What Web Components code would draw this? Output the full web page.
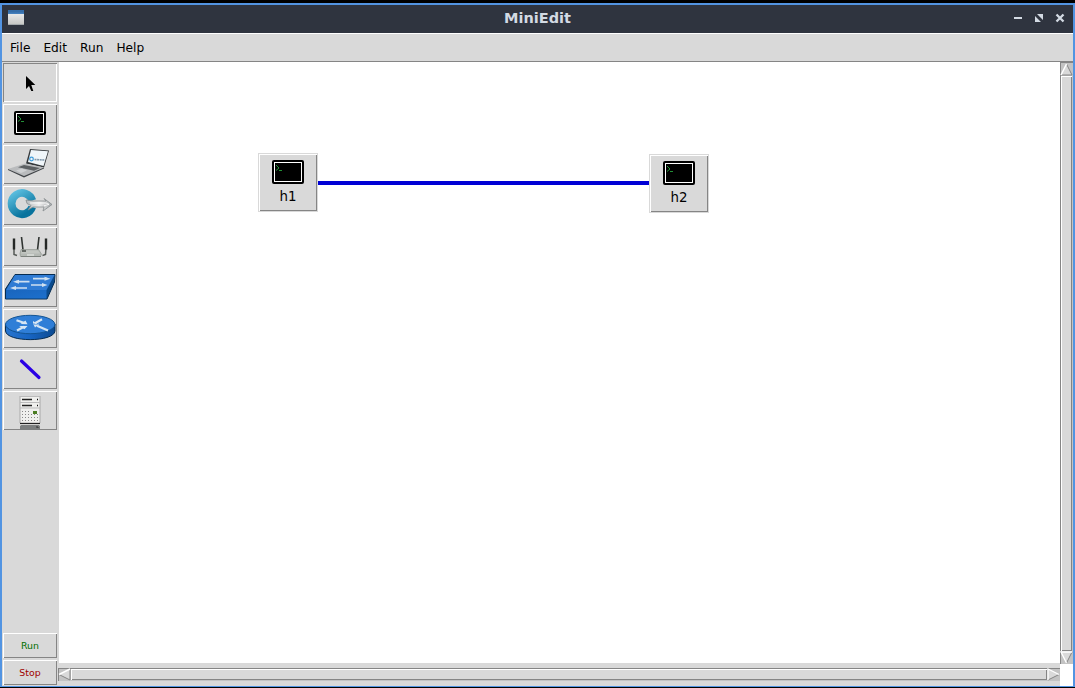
<!DOCTYPE html>
<html lang="en"><head><meta charset="utf-8"><title>MiniEdit</title>
<style>html,body{margin:0;width:1075px;height:688px;overflow:hidden;background:#000;font-family:"DejaVu Sans",sans-serif}</style></head>
<body><mini-edit></mini-edit>
<script>
const define=(name,html,init)=>customElements.define(name,class extends HTMLElement{
  constructor(){super();const t=document.createElement('template');t.innerHTML=html;
    this.attachShadow({mode:'open'}).append(t.content.cloneNode(true));}
  connectedCallback(){if(init)init(this,this.shadowRoot);}
});
const icons={
select:`<path fill="#000" d="M23 13v13l3-3 2.300 5h2l-2-6h4z"/>`,
host:`<rect x="11" y="7" width="32" height="24" rx="2" fill="#000"/><rect x="13.500" y="9.500" width="27" height="19" fill="#000" stroke="#fff"/><path d="M15 12l3 3-3 2.500M18 17.500h3" fill="none" stroke="#229237" stroke-width="1"/>`,
legacySwitch:`<path d="M27 4l19 1.500-5 17-18-4z" fill="#34383b"/><path d="M28 5l17 1.200-4.500 14.800L25 17z" fill="#f0f6fa"/><path d="M22 18.500l19 4-20 9L5 24z" fill="#b9bbbd"/><path d="M21 20l16 3-6 2.800-16-3.600z" fill="#5c6063"/><path d="M5 24l16 7 20-8.500v1L21 32.500 5 25z" fill="#404448"/><path d="M13 25.500l6-2 5 2-6 2.500z" fill="#cfd1d3"/><circle cx="28.500" cy="14" r="1.800" fill="none" stroke="#3b9bdb" stroke-width="1.200"/><path d="M31.500 14.500l10 .5" stroke="#8299ac" stroke-width="1.600" stroke-dasharray="2 .6"/>`,
controller:`<defs><linearGradient id="c" x2=".6" y2="1"><stop stop-color="#5dbfe0"/><stop offset="1" stop-color="#08739d"/></linearGradient><linearGradient id="a"><stop stop-color="#b4b9bb"/><stop offset=".5" stop-color="#ededed"/><stop offset="1" stop-color="#a2a6a8"/></linearGradient></defs><path d="M29.300 14.500A10.600 10.600 0 1 0 29.200 21" fill="none" stroke="url(#c)" stroke-width="7.800"/><path d="M23 14l7 1h13l-2-2.500 8 6-9 6.500 1-4H30l-5 3 3-4.500-4-2z" fill="url(#a)" stroke="#858b8e" stroke-width=".8"/><path d="M27 17h16l3 1.300-5 1.500" fill="none" stroke="#fff" stroke-width=".8"/>`,
legacyRouter:`<path d="M18.500 10l1.500 13M36 10l-1.500 13" stroke="#303432" stroke-width="1.600"/><path d="M11 21v6.500l3 1M43 21l-.5 6.500-3 1" fill="none" stroke="#555a57" stroke-width="1.500"/><path d="M11 11.500v11M43 11.500v11" stroke="#252826" stroke-width="2.400"/><path d="M18 22.500h17.500l3 4.500-1 2.500h-20l-.5-3z" fill="#b4b9b4" stroke="#8a908a" stroke-width=".6"/><path d="M19 23.500h16l2 3H18z" fill="#c2c6c1"/><path d="M19 24h4" stroke="#454a46" stroke-width="1.500"/><path d="M18 29.500h20" stroke="#727873" stroke-width=".8"/><path d="M24 28h7" stroke="#eef2ee"/>`,
switch:`<defs><linearGradient id="s" y2="1"><stop stop-color="#1a65bd"/><stop offset="1" stop-color="#1c70cd"/></linearGradient></defs><path d="M2.500 21L12 6.500h40L51.500 14 44 31H2.500z" fill="#0a4b8d" stroke="#062c51"/><path d="M12 7h39.500L43.500 22H3z" fill="#2f7bd4"/><path d="M3 22h40.500v8.500H3z" fill="url(#s)"/><path d="M30 10.700h14m-16 6.300h14M13 13.700h13.500M10 20h14" stroke="#cfe0f0" stroke-width="1.700"/><path d="M41.500 8.700l6 2-6 2zM39 15l5.500 2-5.500 2zM16 11.700l-6 2 6 2zM13 18l-6 2 6 2z" fill="#cfe0f0"/>`,
router:`<defs><linearGradient id="r"><stop stop-color="#2875cf"/><stop offset=".5" stop-color="#1764c1"/><stop offset="1" stop-color="#0c4a91"/></linearGradient></defs><path d="M2.500 15v7c1 11.500 48.500 11.500 49.500 0v-7z" fill="url(#r)" stroke="#062c51"/><ellipse cx="27.200" cy="15.500" rx="24.700" ry="9.200" fill="#2f7ed7" stroke="#135493"/><path d="M13.500 11.200l8 2.800M39 10.200l-7 4M14 21.500l7-3.700M45 21.500L34 16.700" fill="none" stroke="#d6e5f3" stroke-width="2.200"/><path d="M22.500 11.500l2 3.800-7-.2zM30 12v3.500h5.500zM16 17h8.500l-3 3.300zM30 14.500l6.500.3-4.500 3.700z" fill="#d6e5f3"/>`,
link:`<path d="M18.500 11L36 27.500" stroke="#2a00e5" stroke-width="3.200" stroke-linecap="round"/>`,
server:`<path d="M17 5h20v31H17z" fill="#f0f0ee"/><path d="M17 5v27M37 5v27" stroke="#aaa"/><path d="M17 5.500h20M17 11.500h20M17 17h20" stroke="#bbb" stroke-width="1"/><path d="M19 8.500h10M19 14.500h10" stroke="#222" stroke-width="1.400"/><path d="M34 8.500h1M34 14.500h1" stroke="#111" stroke-width="1.500"/><path d="M19 20.500h9M19 23.500h17M19 26.500h17M19 29.500h17" stroke="#888" stroke-dasharray="1 2"/><path d="M30 21.500h4" stroke="#4b7e22" stroke-width="3"/><path d="M17 32.500h20" stroke="#222" stroke-width="1.300"/><path d="M17 35l1-1h18l1 1v4H17z" fill="#7b7e7e"/><path d="M33 36h2v1" stroke="#333" fill="none"/>`};
define('ui-icon',`<style>:host{display:block;width:54px;height:39px}svg{display:block}</style><svg width="54" height="39" viewBox="0 0 54 39"></svg>`,(h,r)=>r.querySelector('svg').innerHTML=icons[h.getAttribute('name')]);
define('tool-button',`<style>:host{display:grid;box-sizing:border-box;width:54px;height:39px;background:#d9d9d9;box-shadow:inset 1px 1px #fff,inset -1px -1px #858585}:host([pressed]){box-shadow:inset 1px 1px #858585,inset -1px -1px #fff}</style><slot></slot>`);
define('action-button',`<style>:host{display:flex;box-sizing:border-box;width:54px;height:25px;align-items:center;justify-content:center;font-size:9.400px;background:#d9d9d9;box-shadow:inset 1px 1px #fff,inset -1px -1px #858585}</style><slot></slot>`);
define('title-bar',`<style>:host{display:grid;grid-template-columns:80px 1fr 80px;height:28px;background:#2f343f;align-items:center}.mark{margin:-4px 0 0 6px;width:16px;height:15px;background:linear-gradient(#356da9 0 12%,#4580bd 24%,#e7e8e8 28%,#c7c8c6 94%,#78848c)}h1{margin:0;text-align:center;color:#d3dae3;font-size:14.500px;line-height:26px;height:28px}svg{display:block;width:80px;height:28px}</style><div class="mark"></div><h1><slot></slot></h1><svg viewBox="0 0 80 28"><path d="M21 13h8" stroke="#d3dae3" stroke-width="2"/><path d="M44 9h6v6zM42 11v6h6z" fill="#d3dae3"/><path d="M63.500 9.500l7 7M70.500 9.500l-7 7" stroke="#d3dae3" stroke-width="2.300"/></svg>`);
define('menu-bar',`<style>:host{display:flex;box-sizing:border-box;height:29px;background:#d9d9d9;border-top:1px solid #fff;border-bottom:1px solid #858585;padding:1px 8px 0;gap:13px;align-items:center;font-size:12.200px;line-height:27px}</style><slot></slot>`);
define('host-node',`<style>:host{position:absolute;box-sizing:border-box;width:60px;height:59px;border:1px solid #d9d9d9;background:#d9d9d9;box-shadow:inset 1px 1px #fff,inset -1px -1px #858585;text-align:center;font-size:13.400px;line-height:18px}ui-icon{margin:-1px 0 -4px 2px}</style><ui-icon name="host"></ui-icon><slot></slot>`);
define('scroll-bar',`<style>:host{display:flex;box-sizing:border-box;background:#c3c3c3;box-shadow:inset 1px 1px #858585}:host([vertical]){flex-direction:column;width:13px;height:602px;padding-top:1px}:host(:not([vertical])){width:1002px;height:13px}.thumb{flex:1;margin:0 1px;background:#d9d9d9;box-shadow:inset 1px 1px #fff,inset -1px -1px #858585}:host(:not([vertical])) .thumb{margin:1px 0}svg{display:block;width:13px;height:13px}</style><svg viewBox="0 0 13 13"></svg><div class="thumb"></div><svg viewBox="0 0 13 13"></svg>`,(h,r)=>{
 const v=h.hasAttribute('vertical'),s=r.querySelectorAll('svg');
 s[0].innerHTML=v?'<path d="M6.500 1L12 12H1z" fill="#d9d9d9"/><path d="M6.500 1L12 12H1" fill="none" stroke="#858585"/><path d="M6.500 1L1 12" stroke="#fff" stroke-width="1.500"/>':'<path d="M1 6.500L12 1v11z" fill="#d9d9d9"/><path d="M1 6.500L12 12V1" fill="none" stroke="#858585"/><path d="M1 6.500L12 1" stroke="#fff" stroke-width="1.500"/>';
 s[1].innerHTML=v?'<path d="M1 1h11L6.500 12z" fill="#d9d9d9"/><path d="M12 1L6.500 12" stroke="#858585"/><path d="M12 1H1l5.500 11" fill="none" stroke="#fff" stroke-width="1.300"/>':'<path d="M1 1v11l11-5.500z" fill="#d9d9d9"/><path d="M1 12l11-5.500" stroke="#858585"/><path d="M1 12V1l11 5.500" fill="none" stroke="#fff" stroke-width="1.300"/>';
});
define('mini-edit',`<style>:host{display:block;box-sizing:border-box;width:1075px;height:688px;padding-top:3px;background:#000;color:#000}.window{box-sizing:border-box;height:684px;border:2px solid #5294e2;border-bottom-width:1px;background:#d9d9d9}.body{display:grid;grid-template-columns:56px 1002px 13px;height:624px}.tools{display:flex;flex-direction:column;padding:1px 0 1px 1px;gap:2px;box-sizing:border-box}.actions{margin-top:auto;display:flex;flex-direction:column;gap:2px}.run{color:#007000}.stop{color:#a00000}.work{display:grid;grid-template-rows:601px 23px}.canvas{position:relative;background:#fff;margin-left:1px}.wire{position:absolute;left:258px;top:119px;width:333px;height:4px;background:#0000d5}.bottom{padding-top:5px;box-sizing:border-box}.right{background:#fff}</style>
<div class="window"><title-bar>MiniEdit</title-bar><menu-bar><span>File</span><span>Edit</span><span>Run</span><span>Help</span></menu-bar><main class="body"><nav class="tools">${Object.keys(icons).map((n,i)=>`<tool-button ${i?'':'pressed'}><ui-icon name="${n}"></ui-icon></tool-button>`).join('')}<div class="actions"><action-button class="run">Run</action-button><action-button class="stop">Stop</action-button></div></nav><section class="work"><div class="canvas"><div class="wire"></div><host-node style="left:199px;top:91px">h1</host-node><host-node style="left:590px;top:92px">h2</host-node></div><div class="bottom"><scroll-bar></scroll-bar></div></section><aside class="right"><scroll-bar vertical></scroll-bar></aside></main></div>`);
</script></body></html>
